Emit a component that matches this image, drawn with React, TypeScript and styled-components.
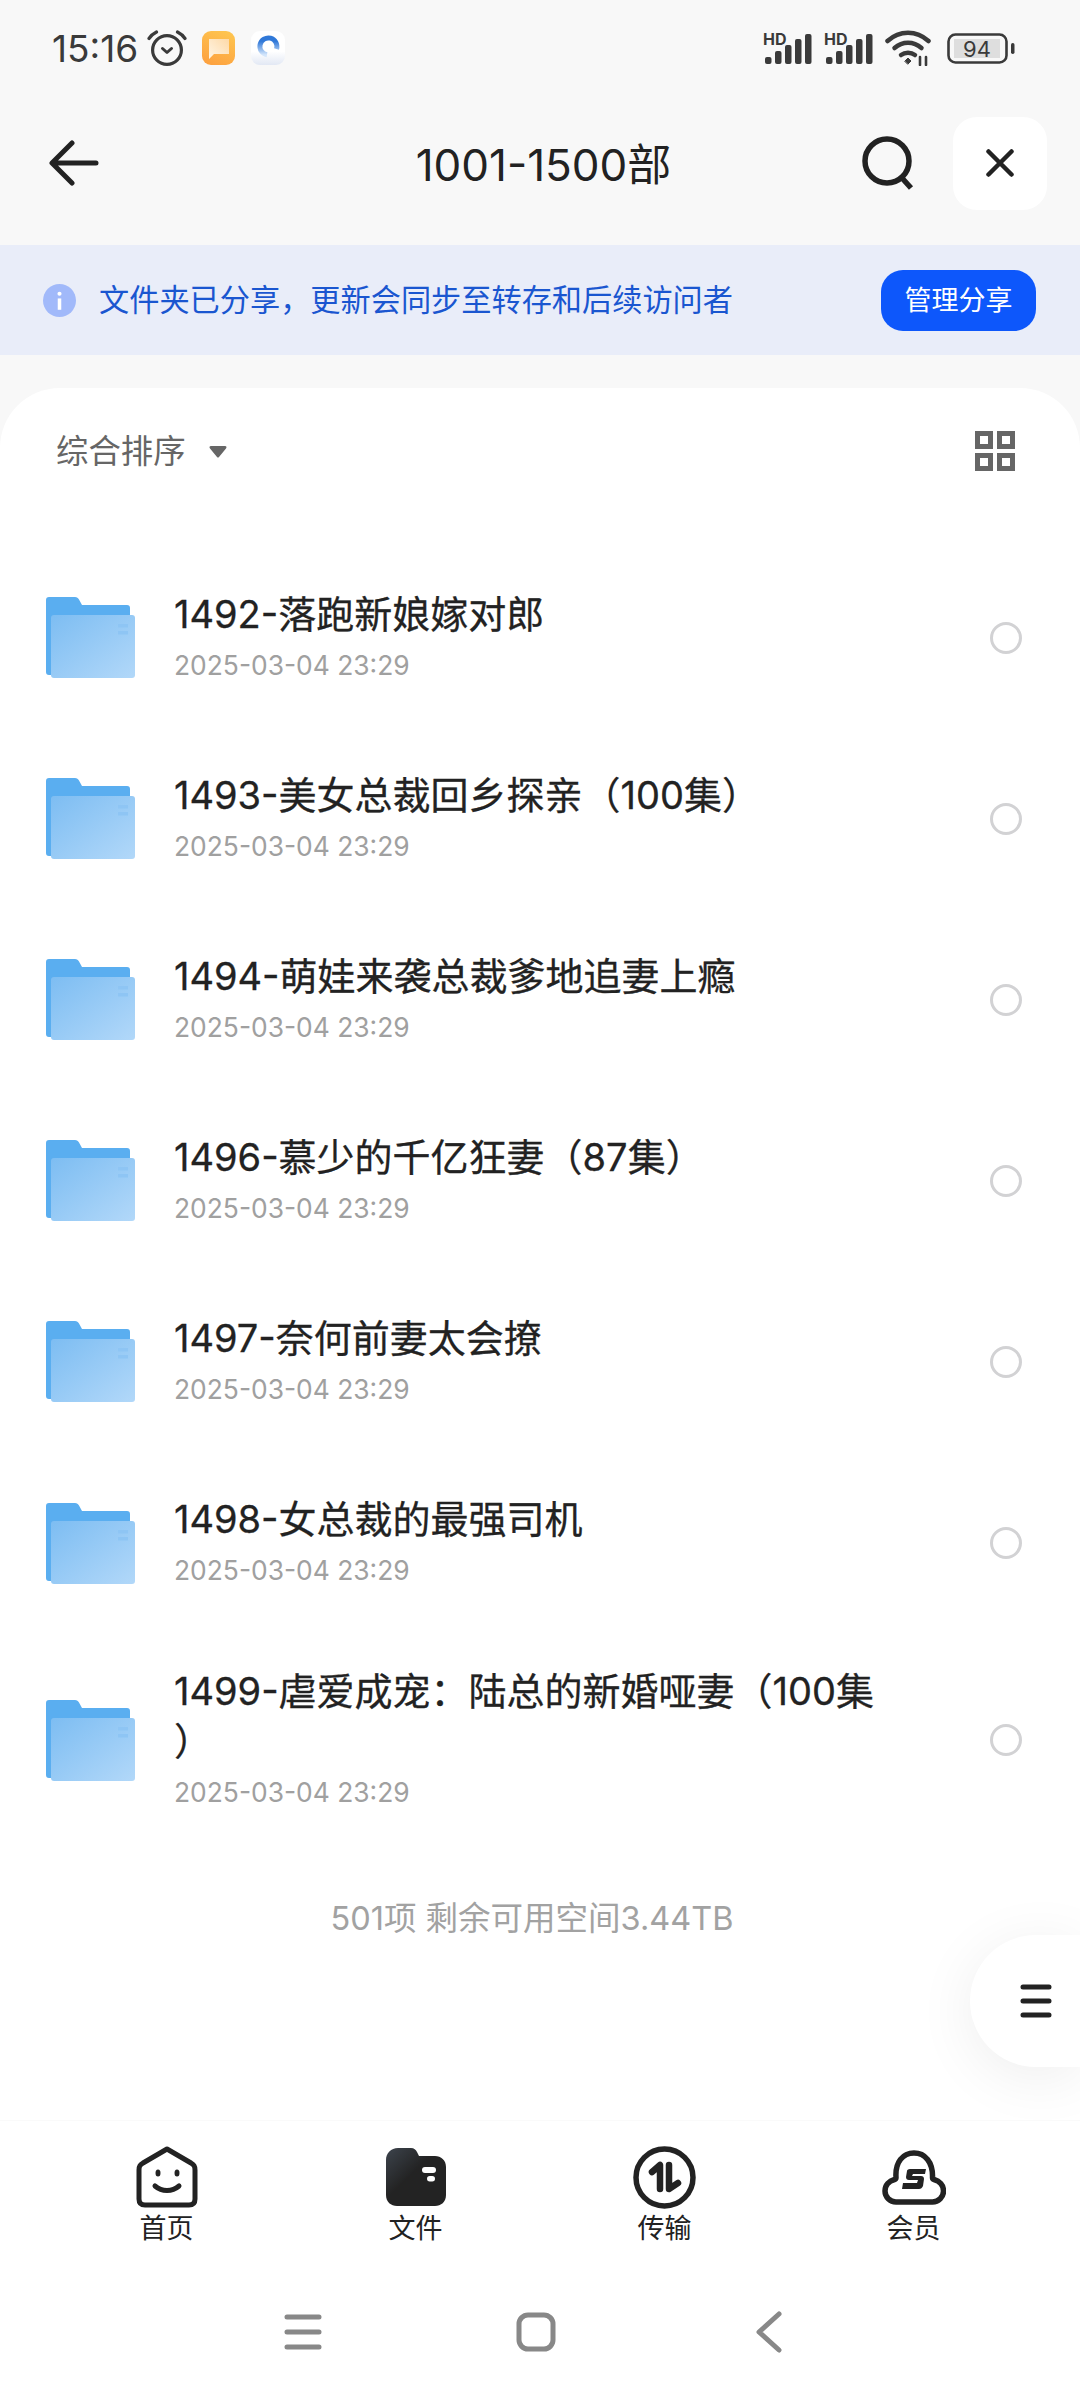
import React from 'react';
import styled, { createGlobalStyle } from 'styled-components';

type FileItem = {
  name: string;
  date: string;
};

const files: FileItem[] = [
  { name: '1492-落跑新娘嫁对郎', date: '2025-03-04 23:29' },
  { name: '1493-美女总裁回乡探亲（100集）', date: '2025-03-04 23:29' },
  { name: '1494-萌娃来袭总裁爹地追妻上瘾', date: '2025-03-04 23:29' },
  { name: '1496-慕少的千亿狂妻（87集）', date: '2025-03-04 23:29' },
  { name: '1497-奈何前妻太会撩', date: '2025-03-04 23:29' },
  { name: '1498-女总裁的最强司机', date: '2025-03-04 23:29' },
  { name: '1499-虐爱成宠：陆总的新婚哑妻（100集）', date: '2025-03-04 23:29' },
];

const GlobalStyle = createGlobalStyle`
  html, body {
    margin: 0;
    padding: 0;
    background: #f8f8f8;
  }
  * {
    box-sizing: border-box;
  }
`;

const Page = styled.div`
  width: 1080px;
  height: 2400px;
  display: flex;
  flex-direction: column;
  position: relative;
  overflow: hidden;
  background: #f8f8f8;
  font-family: Inter, "Noto Sans CJK SC", sans-serif;
`;

const StatusBar = styled.div`
  height: 96px;
  padding: 0 65px 0 52px;
  display: flex;
  align-items: center;
  justify-content: space-between;
  color: #3a3a3a;
`;

const StatusGroup = styled.div`
  display: flex;
  align-items: center;
  gap: ${(p: { $gap: number }) => p.$gap}px;
`;

const Time = styled.span`
  font-size: 37px;
  margin-right: -6px;
`;

const Header = styled.div`
  height: 134px;
  margin-bottom: 15px;
  padding: 0 33px 0 49px;
  display: flex;
  align-items: center;
  justify-content: space-between;
  position: relative;
`;

const Title = styled.h1`
  position: absolute;
  left: 7px;
  right: 0;
  margin: -3px 0 0;
  text-align: center;
  font-size: 44px;
  font-weight: 400;
  color: #222;
`;

const HeaderActions = styled.div`
  display: flex;
  align-items: center;
  gap: 39px;
`;

const CloseButton = styled.div`
  width: 94px;
  height: 93px;
  border-radius: 24px;
  background: #fff;
  display: flex;
  align-items: center;
  justify-content: center;
`;

const Banner = styled.div`
  height: 110px;
  padding: 0 44px 0 43px;
  background: #e9edf9;
  display: flex;
  align-items: center;
`;

const BannerText = styled.span`
  flex: 1;
  margin-left: 23px;
  padding-bottom: 4px;
  font-size: 30.2px;
  color: #1a56d0;
`;

const ManageButton = styled.div`
  width: 155px;
  height: 61px;
  padding-bottom: 3px;
  border-radius: 22px;
  background: #0d57fb;
  color: #fff;
  font-size: 27px;
  display: flex;
  align-items: center;
  justify-content: center;
`;

const Card = styled.div`
  flex: 1;
  margin-top: 33px;
  background: #fff;
  border-radius: 60px 60px 0 0;
  display: flex;
  flex-direction: column;
`;

const SortBar = styled.div`
  height: 159px;
  padding: 0 65px 34px 56px;
  display: flex;
  align-items: center;
  justify-content: space-between;
`;

const SortLabel = styled.div`
  padding-bottom: 4px;
  display: flex;
  align-items: center;
  gap: 23px;
  font-size: 32.4px;
  color: #666;

  svg {
    margin-top: 6px;
  }
`;

const Row = styled.div`
  min-height: 181.1px;
  padding: 29.5px 58px 29.5px 46px;
  display: flex;
  align-items: center;
`;

const RowText = styled.div`
  width: 712px;
  margin-left: 39px;
  padding-top: 3px;
`;

const RowName = styled.div`
  font-size: 38px;
  line-height: 50px;
  color: #222;
  -webkit-text-stroke: 0.3px #222;
  line-break: anywhere;
`;

const RowDate = styled.div`
  padding-top: 1px;
  font-size: 26.4px;
  line-height: 50px;
  color: #a0a0a0;
`;

const Radio = styled.div`
  width: 32px;
  height: 32px;
  margin-left: auto;
  border: 3px solid #d2d2d4;
  border-radius: 50%;
`;

const Summary = styled.div`
  margin-top: 45px;
  padding-right: 16px;
  text-align: center;
  font-size: 32.5px;
  color: #a2a2a2;
`;

const FloatingMenu = styled.div`
  position: absolute;
  right: 0;
  top: 1935px;
  width: 110px;
  height: 132px;
  padding-left: 50px;
  border-radius: 66px 0 0 66px;
  background: #fff;
  box-shadow: 0 10px 60px rgba(0, 0, 0, 0.07);
  display: flex;
  align-items: center;
`;

const TabBar = styled.div`
  height: 130px;
  padding: 0 42px;
  background: #fff;
  border-top: 1px solid #fafafa;
  position: relative;
  display: grid;
  grid-template-columns: repeat(4, 249px);
`;

const Tab = styled.div`
  height: 129px;
  padding-top: 23px;
  display: flex;
  flex-direction: column;
  align-items: center;
  font-size: 27px;
  color: #222;
`;

const TabIcon = styled.div`
  height: 66px;
  display: flex;
  align-items: center;
  justify-content: center;
`;

const TabLabel = styled.span`
  line-height: 38px;
`;

const SystemNav = styled.div`
  height: 150px;
  padding: 14px 0 0 186.5px;
  background: #fff;
  display: grid;
  grid-template-columns: repeat(3, 233px);
  align-items: center;
  justify-items: center;
`;

const AlarmIcon = () => (
  <svg width="40" height="36" viewBox="0 0 40 36" fill="none" stroke="#3a3a3a" strokeWidth="3.2" strokeLinecap="round" strokeLinejoin="round">
    <circle cx="20" cy="20" r="14.400" />
    <path d="M15.500 18.500l4.500 4 4.500-4" strokeWidth="3" />
    <path d="M2 8.500C4 5.500 6.500 3.500 9.500 2M38 8.500C36 5.500 33.500 3.500 30.500 2" />
  </svg>
);

const NoteAppIcon = () => (
  <svg width="34" height="34" viewBox="0 0 34 34">
    <defs>
      <linearGradient id="noteBg" x1="0.7" y1="0" x2="0.3" y2="1">
        <stop offset="0" stopColor="#fec44f" />
        <stop offset="1" stopColor="#fda240" />
      </linearGradient>
      <linearGradient id="notePage" x1="0" y1="1" x2="1" y2="0">
        <stop offset="0" stopColor="#fff6e6" />
        <stop offset="1" stopColor="#fdd9a8" />
      </linearGradient>
    </defs>
    <rect width="33" height="34" rx="9" fill="url(#noteBg)" />
    <path d="M7 8h20v15H12l-5 5z" fill="url(#notePage)" />
  </svg>
);

const BlueAppIcon = () => (
  <svg width="34" height="34" viewBox="0 0 34 34" fill="none">
    <defs>
      <linearGradient id="blueBg" x1="0" y1="0" x2="0" y2="1">
        <stop offset="0.6" stopColor="#ffffff" />
        <stop offset="1" stopColor="#e2e8f4" />
      </linearGradient>
      <linearGradient id="blueRing" x1="0" y1="0" x2="0" y2="1">
        <stop offset="0.2" stopColor="#3078d8" />
        <stop offset="1" stopColor="#d4e6fb" />
      </linearGradient>
    </defs>
    <rect width="34" height="34" rx="9" fill="url(#blueBg)" />
    <path d="M25.500 18A8.500 8.500 0 1 0 16 23.800" stroke="url(#blueRing)" strokeWidth="5" />
  </svg>
);

const SignalIcon = () => (
  <svg width="50" height="38" viewBox="0 0 50 38" fill="#3a3a3a">
    <text x="0" y="16" fontSize="16" fontWeight="700" fontFamily="Inter, sans-serif">HD</text>
    <rect x="2" y="28" width="6.500" height="7" rx="2" />
    <rect x="12" y="22" width="6.500" height="13" rx="2" />
    <rect x="22" y="16" width="6.500" height="19" rx="2" />
    <rect x="32" y="10" width="6.500" height="25" rx="2" />
    <rect x="42" y="5" width="6.500" height="30" rx="2" />
  </svg>
);

const WifiIcon = () => (
  <svg width="46" height="36" viewBox="0 0 46 36" fill="none" stroke="#3a3a3a" strokeWidth="4.500" strokeLinecap="round">
    <path d="M2.500 11c12-11 29-11 41 0" />
    <path d="M9.500 18c8-7 19-7 27 0" />
    <path d="M16 25c4-3 10-3 14 0" />
    <path d="M20 31l3-3 3 3-3 3z" fill="#3a3a3a" strokeWidth="1" />
    <path d="M35 27v8M41 27v8" strokeWidth="2.600" />
  </svg>
);

const BatteryIcon = () => (
  <svg width="73" height="31" viewBox="-5 0 73 31" fill="none">
    <rect x="1.500" y="1.500" width="58" height="28" rx="7" stroke="#3a3a3a" strokeWidth="2.600" />
    <rect x="7" y="6" width="46" height="19" fill="#dedede" />
    <rect x="64" y="10" width="3.500" height="11" rx="1.700" fill="#3a3a3a" />
    <text x="30" y="24" textAnchor="middle" fontSize="22" fill="#3a3a3a" fontFamily="Inter, sans-serif">94</text>
  </svg>
);

const BackIcon = () => (
  <svg width="50" height="46" viewBox="0 0 50 46" fill="none" stroke="#222" strokeWidth="5" strokeLinecap="round" strokeLinejoin="round">
    <path d="M47 23H4M23 3L3 23l20 20" />
  </svg>
);

const SearchIcon = () => (
  <svg width="52" height="54" viewBox="0 0 52 54" fill="none" stroke="#222" strokeWidth="5.500">
    <circle cx="25" cy="25" r="22" />
    <path d="M40 42l9 10" />
  </svg>
);

const CloseIcon = () => (
  <svg width="28" height="28" viewBox="0 0 28 28" fill="none" stroke="#222" strokeWidth="4.500" strokeLinecap="round">
    <path d="M2.500 2.500l23 23M25.500 2.500l-23 23" />
  </svg>
);

const InfoIcon = () => (
  <svg width="33" height="33" viewBox="0 0 32 32">
    <circle cx="16" cy="16" r="16" fill="#a1b9fa" />
    <rect x="14.300" y="14" width="3.400" height="11" fill="#fff" />
    <circle cx="16" cy="9.500" r="2" fill="#fff" />
  </svg>
);

const CaretIcon = () => (
  <svg width="18" height="14" viewBox="0 0 18 14">
    <path d="M2 1h14c1.500 0 2 1.200 1 2.400L10 12c-.6.7-1.400.7-2 0L1 3.400C0 2.200.5 1 2 1z" fill="#666" />
  </svg>
);

const GridIcon = () => (
  <svg width="40" height="40" viewBox="0 0 40 40" fill="none" stroke="#666" strokeWidth="5">
    <rect x="2.500" y="2.500" width="13" height="13" />
    <rect x="24.500" y="2.500" width="13" height="13" />
    <rect x="2.500" y="24.500" width="13" height="13" />
    <rect x="24.500" y="24.500" width="13" height="13" />
  </svg>
);

const FolderIcon = () => (
  <svg width="89" height="81" viewBox="0 0 89 81">
    <defs>
      <linearGradient id="folderFront" x1="0" y1="0" x2="1" y2="1">
        <stop offset="0" stopColor="#7dbdf2" />
        <stop offset="1" stopColor="#b2d8f9" />
      </linearGradient>
    </defs>
    <path d="M3 0h26c2 0 3 1 4 2.500L36 8h45c2 0 3 1 3 3v67H3c-2 0-3-1-3-3V3c0-2 1-3 3-3z" fill="#5aaef0" />
    <path d="M8 18h78c2 0 3 1 3 3v57c0 2-1 3-3 3H8c-2 0-3-1-3-3V21c0-2 1-3 3-3z" fill="url(#folderFront)" />
    <rect x="72" y="27" width="10" height="3.500" fill="#8ec5f4" />
    <rect x="72" y="34" width="10" height="3.500" fill="#8ec5f4" />
  </svg>
);

const MenuIcon = () => (
  <svg width="32" height="34" viewBox="0 0 32 34" fill="none" stroke="#222" strokeWidth="5" strokeLinecap="round">
    <path d="M3 3h26M3 17h26M3 31h26" />
  </svg>
);

const HomeIcon = () => (
  <svg width="62" height="62" viewBox="0 0 62 62" fill="none" stroke="#222" strokeWidth="5" strokeLinejoin="round" strokeLinecap="round">
    <path d="M31 3L7 17c-3 2-4 3-4 7v29c0 4 2 6 6 6h44c4 0 6-2 6-6V24c0-4-1-5-4-7z" />
    <path d="M19 40c7 6 17 6 24 0" />
    <ellipse cx="22" cy="27" rx="2.500" ry="3.500" fill="#222" stroke="none" />
    <ellipse cx="41" cy="27" rx="2.500" ry="3.500" fill="#222" stroke="none" />
  </svg>
);

const FilesIcon = () => (
  <svg width="60" height="58" viewBox="0 0 60 58">
    <defs>
      <linearGradient id="filesTab" x1="0" y1="0" x2="0.8" y2="0.8">
        <stop offset="0" stopColor="#3d444d" />
        <stop offset="0.55" stopColor="#232323" />
      </linearGradient>
    </defs>
    <path d="M12 0h13c3 0 5 2 6 4l2 4h16c6 0 11 4 11 11v28c0 7-5 11-11 11H11C5 58 0 54 0 47V12C0 5 5 0 12 0z" fill="url(#filesTab)" />
    <rect x="36" y="19" width="14" height="6" rx="3" fill="#fff" />
    <rect x="41" y="28" width="8" height="5.500" rx="2.750" fill="#fff" />
  </svg>
);

const TransferIcon = () => (
  <svg width="63" height="63" viewBox="0 0 63 63" fill="none">
    <circle cx="31.500" cy="31.500" r="28.500" stroke="#222" strokeWidth="5.500" />
    <path d="M19 26l8-7v24" stroke="#222" strokeWidth="6.500" strokeLinecap="round" strokeLinejoin="round" />
    <path d="M36 19v24l9-6" stroke="#222" strokeWidth="6.500" strokeLinecap="round" strokeLinejoin="round" />
  </svg>
);

const MemberIcon = () => (
  <svg width="64" height="55" viewBox="0 0 64 55" fill="none">
    <path
      d="M14 52c-6 0-11-5-11-11 0-6 4-10 9.500-11.500 1-.3 1.500-.8 1.500-2C13 12 21 3 32 3s19 9 18.500 24.500c0 1.200.5 1.700 1.500 2 5.500 1.500 9.500 5.500 9.500 11.500 0 6-5 11-11 11z"
      stroke="#222"
      strokeWidth="5.500"
      strokeLinejoin="round"
    />
    <path d="M44 19H28c-2 0-3 1-3 2l-1 6c0 2 1 3 3 3h9l-1 3H21l-1 6h17c2 0 3-1 4-3l1-7c0-2-1-3-3-3h-9l1-2h12z" fill="#222" />
  </svg>
);

const NavMenuIcon = () => (
  <svg width="38" height="36" viewBox="0 0 38 36" fill="none" stroke="#888" strokeWidth="5" strokeLinecap="round">
    <path d="M3 3h32M3 18h32M3 33h32" />
  </svg>
);

const NavHomeIcon = () => (
  <svg width="40" height="40" viewBox="0 0 40 40" fill="none" stroke="#888" strokeWidth="5">
    <rect x="3" y="3" width="34" height="34" rx="9" />
  </svg>
);

const NavBackIcon = () => (
  <svg width="26" height="42" viewBox="0 0 26 42" fill="none" stroke="#888" strokeWidth="5" strokeLinecap="round" strokeLinejoin="round">
    <path d="M23 3L3 21l20 18" />
  </svg>
);

const App = () => {
  return (
    <Page>
      <GlobalStyle />
      <StatusBar>
        <StatusGroup $gap={15}>
          <Time>15:16</Time>
          <AlarmIcon />
          <NoteAppIcon />
          <BlueAppIcon />
        </StatusGroup>
        <StatusGroup $gap={11}>
          <SignalIcon />
          <SignalIcon />
          <WifiIcon />
          <BatteryIcon />
        </StatusGroup>
      </StatusBar>
      <Header>
        <BackIcon />
        <Title>1001-1500部</Title>
        <HeaderActions>
          <SearchIcon />
          <CloseButton>
            <CloseIcon />
          </CloseButton>
        </HeaderActions>
      </Header>
      <Banner>
        <InfoIcon />
        <BannerText>文件夹已分享，更新会同步至转存和后续访问者</BannerText>
        <ManageButton>管理分享</ManageButton>
      </Banner>
      <Card>
        <SortBar>
          <SortLabel>
            综合排序
            <CaretIcon />
          </SortLabel>
          <GridIcon />
        </SortBar>
        {files.map((file) => (
          <Row key={file.name}>
            <FolderIcon />
            <RowText>
              <RowName>{file.name}</RowName>
              <RowDate>{file.date}</RowDate>
            </RowText>
            <Radio />
          </Row>
        ))}
        <Summary>501项 剩余可用空间3.44TB</Summary>
      </Card>
      <FloatingMenu>
        <MenuIcon />
      </FloatingMenu>
      <TabBar>
        <Tab>
          <TabIcon><HomeIcon /></TabIcon>
          <TabLabel>首页</TabLabel>
        </Tab>
        <Tab>
          <TabIcon><FilesIcon /></TabIcon>
          <TabLabel>文件</TabLabel>
        </Tab>
        <Tab>
          <TabIcon><TransferIcon /></TabIcon>
          <TabLabel>传输</TabLabel>
        </Tab>
        <Tab>
          <TabIcon><MemberIcon /></TabIcon>
          <TabLabel>会员</TabLabel>
        </Tab>
      </TabBar>
      <SystemNav>
        <NavMenuIcon />
        <NavHomeIcon />
        <NavBackIcon />
      </SystemNav>
    </Page>
  );
};

export default App;
